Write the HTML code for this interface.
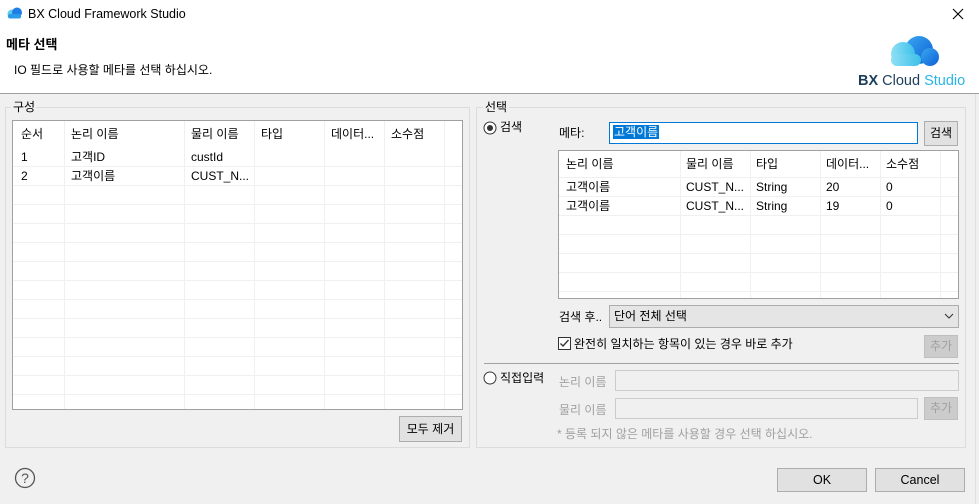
<!DOCTYPE html>
<html><head><meta charset="utf-8"><style>
*{box-sizing:border-box;margin:0;padding:0}
body{width:979px;height:504px;background:#f0f0f0;font-family:"Liberation Sans","Noto Sans CJK KR",sans-serif;font-size:12px;color:#000;position:relative;overflow:hidden}
.a{position:absolute}
.t{position:absolute;white-space:nowrap;line-height:14px}
.grp{position:absolute;border:1px solid #dcdcdc}
.lbl{position:absolute;background:#f0f0f0;padding:0 2px;line-height:14px}
.tbl{position:absolute;background:#fff;border:1px solid #a0a0a0;overflow:hidden}
.btn{position:absolute;background:#e1e1e1;border:1px solid #adadad;text-align:center}
.dis{color:#a0a0a0}
</style></head><body>
<div class="a" style="left:0;top:0;width:979px;height:94px;background:#fff;border-bottom:1px solid #a0a0a0"></div>
<svg class="a" style="left:6px;top:7px" width="18" height="12"><circle cx="6" cy="7" r="4.5" fill="#5fc8ee"/><circle cx="11" cy="5.5" r="5" fill="#1e7ee6"/><rect x="2" y="7" width="13" height="4.5" rx="2" fill="#2a9be8"/></svg>
<div class="t" style="left:28px;top:7px;font-size:12.5px">BX Cloud Framework Studio</div>
<svg class="a" style="left:952px;top:8px" width="12" height="12"><path d="M1 1L11 11M11 1L1 11" stroke="#000" stroke-width="1.1"/></svg>
<div class="t" style="left:6px;top:38px;font-weight:bold;font-size:13px">메타 선택</div>
<div class="t" style="left:14px;top:63px">IO 필드로 사용할 메타를 선택 하십시오.</div>
<svg class="a" style="left:884px;top:33px" width="60" height="36"><defs><linearGradient id="g1" x1="0" x2="1"><stop offset="0" stop-color="#8fe0f5"/><stop offset="1" stop-color="#3cc0e8"/></linearGradient><linearGradient id="g2" x1="0" y1="0" x2="1" y2="1"><stop offset="0" stop-color="#3aa8f0"/><stop offset="1" stop-color="#0c5fd6"/></linearGradient></defs><circle cx="35" cy="17" r="14" fill="url(#g2)"/><circle cx="46" cy="24" r="9" fill="url(#g2)"/><circle cx="19" cy="21" r="12" fill="url(#g1)"/><rect x="7" y="21" width="30" height="12" rx="6" fill="url(#g1)"/></svg>
<div class="t" style="left:858px;top:74px;font-size:14.5px;font-weight:bold;color:#1d3e5a">BX <span style="font-weight:normal">Cloud</span> <span style="font-weight:normal;color:#2ab5e8">Studio</span></div>
<div class="a" style="left:975px;top:94px;width:1px;height:410px;background:#e0e0e0"></div>

<div class="grp" style="left:5px;top:107px;width:465px;height:341px"></div>
<div class="lbl" style="left:11px;top:100px">구성</div>
<div class="tbl" style="left:12px;top:120px;width:451px;height:290px">
<svg width="451" height="290" style="display:block">
<g stroke="#f0f0f0">
<line x1="0" y1="45.5" x2="451" y2="45.5"/><line x1="0" y1="64.5" x2="451" y2="64.5"/><line x1="0" y1="83.5" x2="451" y2="83.5"/><line x1="0" y1="102.5" x2="451" y2="102.5"/><line x1="0" y1="121.5" x2="451" y2="121.5"/><line x1="0" y1="140.5" x2="451" y2="140.5"/><line x1="0" y1="159.5" x2="451" y2="159.5"/><line x1="0" y1="178.5" x2="451" y2="178.5"/><line x1="0" y1="197.5" x2="451" y2="197.5"/><line x1="0" y1="216.5" x2="451" y2="216.5"/><line x1="0" y1="235.5" x2="451" y2="235.5"/><line x1="0" y1="254.5" x2="451" y2="254.5"/><line x1="0" y1="273.5" x2="451" y2="273.5"/>
<line x1="51.5" y1="0" x2="51.5" y2="290"/><line x1="171.5" y1="0" x2="171.5" y2="290"/><line x1="241.5" y1="0" x2="241.5" y2="290"/><line x1="311.5" y1="0" x2="311.5" y2="290"/><line x1="371.5" y1="0" x2="371.5" y2="290"/><line x1="431.5" y1="0" x2="431.5" y2="290"/>
</g></svg>
<div class="t" style="left:8px;top:6px">순서</div><div class="t" style="left:58px;top:6px">논리 이름</div><div class="t" style="left:178px;top:6px">물리 이름</div><div class="t" style="left:248px;top:6px">타입</div><div class="t" style="left:318px;top:6px">데이터...</div><div class="t" style="left:378px;top:6px">소수점</div>
<div class="t" style="left:8px;top:29px">1</div><div class="t" style="left:58px;top:29px">고객ID</div><div class="t" style="left:178px;top:29px">custId</div>
<div class="t" style="left:8px;top:48px">2</div><div class="t" style="left:58px;top:48px">고객이름</div><div class="t" style="left:178px;top:48px">CUST_N...</div>
</div>
<div class="btn" style="left:399px;top:416px;width:63px;height:26px;line-height:24px">모두 제거</div>

<div class="grp" style="left:476px;top:107px;width:490px;height:341px"></div>
<div class="lbl" style="left:483px;top:100px">선택</div>
<svg class="a" style="left:483px;top:121px" width="14" height="14"><circle cx="7" cy="7" r="6" fill="#fff" stroke="#333"/><circle cx="7" cy="7" r="3" fill="#333"/></svg>
<div class="t" style="left:500px;top:120px">검색</div>
<div class="t" style="left:559px;top:126px">메타:</div>
<div class="a" style="left:609px;top:122px;width:309px;height:22px;background:#fff;border:1px solid #0078d7"></div>
<div class="t" style="left:613px;top:125px;background:#0078d7;color:#fff;padding:0 1px">고객이름</div>
<div class="btn" style="left:924px;top:121px;width:34px;height:25px;line-height:23px">검색</div>
<div class="tbl" style="left:558px;top:150px;width:401px;height:149px">
<svg width="401" height="149" style="display:block"><g stroke="#f0f0f0">
<line x1="0" y1="26.5" x2="401" y2="26.5"/><line x1="0" y1="45.5" x2="401" y2="45.5"/><line x1="0" y1="64.5" x2="401" y2="64.5"/><line x1="0" y1="83.5" x2="401" y2="83.5"/><line x1="0" y1="102.5" x2="401" y2="102.5"/><line x1="0" y1="121.5" x2="401" y2="121.5"/><line x1="0" y1="140.5" x2="401" y2="140.5"/>
<line x1="121.5" y1="0" x2="121.5" y2="149"/><line x1="191.5" y1="0" x2="191.5" y2="149"/><line x1="261.5" y1="0" x2="261.5" y2="149"/><line x1="321.5" y1="0" x2="321.5" y2="149"/><line x1="381.5" y1="0" x2="381.5" y2="149"/></g></svg>
<div class="t" style="left:7px;top:6px">논리 이름</div><div class="t" style="left:127px;top:6px">물리 이름</div><div class="t" style="left:197px;top:6px">타입</div><div class="t" style="left:267px;top:6px">데이터...</div><div class="t" style="left:327px;top:6px">소수점</div>
<div class="t" style="left:7px;top:29px">고객이름</div><div class="t" style="left:127px;top:29px">CUST_N...</div><div class="t" style="left:197px;top:29px">String</div><div class="t" style="left:267px;top:29px">20</div><div class="t" style="left:327px;top:29px">0</div>
<div class="t" style="left:7px;top:48px">고객이름</div><div class="t" style="left:127px;top:48px">CUST_N...</div><div class="t" style="left:197px;top:48px">String</div><div class="t" style="left:267px;top:48px">19</div><div class="t" style="left:327px;top:48px">0</div>
</div>
<div class="t" style="left:559px;top:310px">검색 후..</div>
<div class="a" style="left:609px;top:305px;width:350px;height:23px;background:#e5e5e5;border:1px solid #adadad"></div>
<div class="t" style="left:614px;top:309px">단어 전체 선택</div>
<svg class="a" style="left:944px;top:313px" width="10" height="7"><path d="M1 1L5 5L9 1" fill="none" stroke="#333"/></svg>
<svg class="a" style="left:558px;top:337px" width="13" height="13"><rect x=".5" y=".5" width="12" height="12" fill="#fff" stroke="#333"/><path d="M2.5 6.5L5 9L10.5 3" fill="none" stroke="#333" stroke-width="1.3"/></svg>
<div class="t" style="left:574px;top:337px">완전히 일치하는 항목이 있는 경우 바로 추가</div>
<div class="btn dis" style="left:924px;top:335px;width:34px;height:23px;line-height:21px;background:#ccc;border-color:#bfbfbf">추가</div>
<div class="a" style="left:484px;top:363px;width:475px;height:1px;background:#a0a0a0"></div>
<svg class="a" style="left:483px;top:371px" width="14" height="14"><circle cx="7" cy="7" r="6" fill="#fff" stroke="#333"/></svg>
<div class="t" style="left:500px;top:371px">직접입력</div>
<div class="t dis" style="left:559px;top:375px">논리 이름</div>
<div class="a" style="left:615px;top:370px;width:344px;height:21px;background:#f0f0f0;border:1px solid #ccc"></div>
<div class="t dis" style="left:559px;top:403px">물리 이름</div>
<div class="a" style="left:615px;top:398px;width:303px;height:21px;background:#f0f0f0;border:1px solid #ccc"></div>
<div class="btn dis" style="left:924px;top:397px;width:34px;height:23px;line-height:21px;background:#ccc;border-color:#bfbfbf">추가</div>
<div class="t dis" style="left:557px;top:427px">* 등록 되지 않은 메타를 사용할 경우 선택 하십시오.</div>

<svg class="a" style="left:14px;top:467px" width="22" height="22"><circle cx="11" cy="11" r="9.5" fill="none" stroke="#555" stroke-width="1.3"/><text x="11" y="16" font-size="14" text-anchor="middle" fill="#555" font-family="Liberation Sans">?</text></svg>
<div class="btn" style="left:777px;top:468px;width:90px;height:24px;line-height:22px;font-size:12.5px">OK</div>
<div class="btn" style="left:875px;top:468px;width:90px;height:24px;line-height:22px;font-size:12.5px">Cancel</div>
</body></html>
